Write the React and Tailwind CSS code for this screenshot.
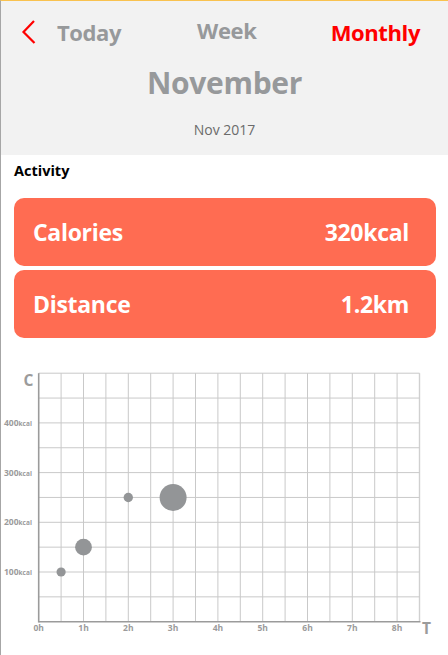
import React from 'react'

const font = { fontFamily: '"Open Sans", "Noto Sans", Arial, sans-serif' }

const stats = [
  { label: 'Calories', value: '320kcal' },
  { label: 'Distance', value: '1.2km' },
]

// chart geometry in page coordinates
const X0 = 38.7
const HOUR = 44.8
const Y0 = 621.7
const KCAL100 = 49.7

const bubbles = [
  { h: 0.5, c: 100, r: 4.6 },
  { h: 1, c: 150, r: 8.4 },
  { h: 2, c: 250, r: 4.7 },
  { h: 3, c: 250, r: 13.5 },
]

function Chart() {
  const cols = Array.from({ length: 18 }, (_, i) => X0 + i * (HOUR / 2))
  const rows = Array.from({ length: 11 }, (_, i) => Y0 - i * (KCAL100 / 2))
  const right = X0 + 17 * (HOUR / 2)
  const top = Y0 - 10 * (KCAL100 / 2)
  return (
    <svg width="447" height="310" viewBox="1 345 447 310" className="block">
      {cols.slice(1).map((x, i) => (
        <line key={'v' + i} x1={x} x2={x} y1={top} y2={Y0} stroke={i === 16 ? '#d0d0d0' : '#c9c9c9'} strokeWidth={i === 16 ? 1.4 : 1} />
      ))}
      {rows.slice(1).map((y, i) => (
        <line key={'h' + i} x1={X0} x2={right} y1={y} y2={y} stroke="#c9c9c9" strokeWidth="1" />
      ))}
      <line x1={X0} x2={X0} y1={top} y2={Y0 + 0.8} stroke="#9b9b9b" strokeWidth="1.6" />
      <line x1={X0} x2={right + 1} y1={Y0} y2={Y0} stroke="#9b9b9b" strokeWidth="1.6" />
      {bubbles.map((b, i) => (
        <circle key={i} cx={X0 + b.h * HOUR} cy={Y0 - (b.c / 100) * KCAL100} r={b.r} fill="#939597" />
      ))}
      <g fill="#9b9b9b" fontWeight="700" style={font}>
        <text x="33.5" y="385.5" fontSize="15.5" textAnchor="end">C</text>
        <text x="422" y="633.5" fontSize="15.5">T</text>
        {[100, 200, 300, 400].map((v) => (
          <text key={v} x="4" y={Y0 - (v / 100) * KCAL100 + 3} fontSize="8.5">
            {v}
            <tspan fontSize="6.5">kcal</tspan>
          </text>
        ))}
        {Array.from({ length: 9 }, (_, i) => (
          <text key={i} x={X0 + i * HOUR} y="631" fontSize="8.5" textAnchor="middle">
            {i}h
          </text>
        ))}
      </g>
    </svg>
  )
}

export default function App() {
  return (
    <div
      className="w-[448px] h-[655px] overflow-hidden bg-white border-t border-t-[#f9c24f] border-l border-l-[#a6a6a6]"
      style={font}
    >
      {/* header */}
      <div className="h-[154px] bg-[#f2f2f2]">
        <div className="flex items-center h-[42px] pt-[19px]">
          <svg width="15" height="24" viewBox="0 0 15 24" className="ml-[20px] shrink-0">
            <path d="M13 1 L2.5 12 L13.5 23" fill="none" stroke="#ff0000" strokeWidth="2.2" />
          </svg>
          <span className="ml-[21px] text-[22px] leading-none font-bold text-[#97999b] tracking-[-0.4px]">Today</span>
          <span className="ml-[76px] -mt-[3px] text-[22px] leading-none font-bold text-[#97999b] tracking-[-0.4px]">Week</span>
          <span className="ml-auto mr-[28px] text-[22px] leading-none font-bold text-[#ff0000] tracking-[-0.4px]">Monthly</span>
        </div>
        <div className="text-center mt-[25px] text-[30px] leading-none font-bold text-[#97999b] tracking-[-0.3px]">November</div>
        <div className="text-center mt-[25px] text-[14px] leading-none text-[#6b6b6b]">Nov 2017</div>
      </div>

      {/* activity */}
      <div className="h-[43px] pl-[13px] pt-[7px] text-[14.5px] leading-[17px] font-bold text-black">Activity</div>
      <div className="flex flex-col gap-[4px] pl-[13px] pr-[12px]">
        {stats.map((s) => (
          <div
            key={s.label}
            className="h-[68px] rounded-[10px] bg-[#ff6c52] flex items-center justify-between pl-[19px] pr-[27px] text-white font-bold text-[23px] tracking-[-0.3px]"
          >
            <span>{s.label}</span>
            <span>{s.value}</span>
          </div>
        ))}
      </div>

      {/* chart */}
      <div className="mt-[7px]">
        <Chart />
      </div>
    </div>
  )
}
